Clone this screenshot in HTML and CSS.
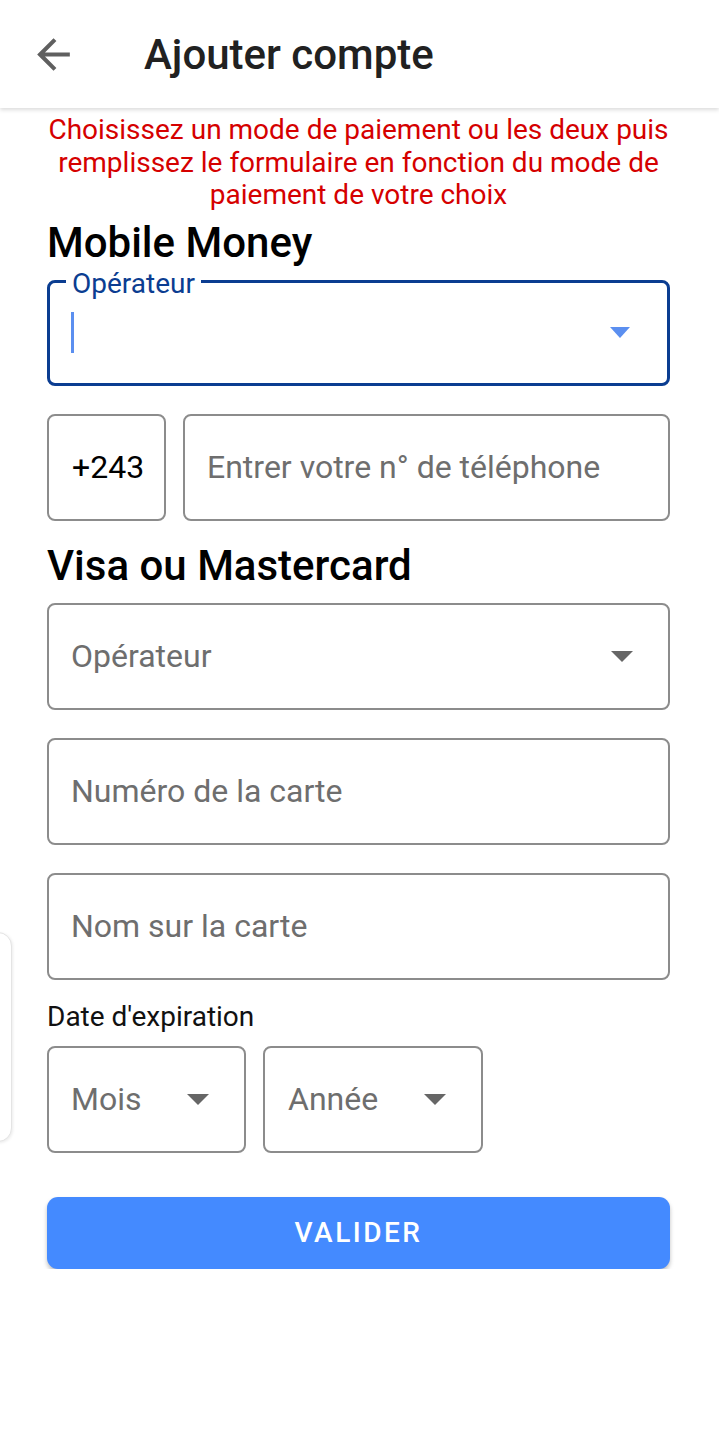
FILE: index.html
```html
<!DOCTYPE html>
<html lang="fr">
<head>
  <meta charset="UTF-8">
  <meta name="viewport" content="width=device-width, initial-scale=1.0">
  <title>Ajouter compte</title>
  <link rel="stylesheet" href="styles.css">
</head>
<body>
  <header class="toolbar">
    <svg class="back-icon" viewBox="0 0 24 24" width="49" height="49">
      <path d="M20 11H7.83l5.59-5.59L12 4l-8 8 8 8 1.41-1.41L7.83 13H20v-2z" fill="#5f5f5f"/>
    </svg>
    <h1 class="toolbar-title">Ajouter compte</h1>
  </header>

  <main class="content">
    <p class="notice">Choisissez un mode de paiement ou les deux puis remplissez le formulaire en fonction du mode de paiement de votre choix</p>

    <h2 class="section-title">Mobile Money</h2>
    <div class="field field-focused">
      <span class="floating-label">Opérateur</span>
      <span class="cursor"></span>
      <span class="arrow arrow-blue"></span>
    </div>

    <div class="phone-row">
      <div class="field prefix">+243</div>
      <div class="field phone">
        <span class="placeholder">Entrer votre n° de téléphone</span>
      </div>
    </div>

    <h2 class="section-title visa-title">Visa ou Mastercard</h2>
    <div class="field select">
      <span class="placeholder">Opérateur</span>
      <span class="arrow"></span>
    </div>
    <div class="field">
      <span class="placeholder">Numéro de la carte</span>
    </div>
    <div class="field">
      <span class="placeholder">Nom sur la carte</span>
    </div>

    <div class="date-label">Date d'expiration</div>
    <div class="date-row">
      <div class="field select month">
        <span class="placeholder">Mois</span>
        <span class="arrow"></span>
      </div>
      <div class="field select year">
        <span class="placeholder">Année</span>
        <span class="arrow"></span>
      </div>
    </div>

    <button class="submit">VALIDER</button>
  </main>

  <!-- card peeking in from the left edge -->
  <div class="side-card"></div>
</body>
</html>
```

FILE: styles.css
```css
body {
  margin: 0;
  font-family: Roboto, "Liberation Sans", sans-serif;
  background-color: #fff;
  color: #111;
}

.toolbar {
  height: 108px;
  display: flex;
  align-items: center;
  padding-left: 29px;
  box-sizing: border-box;
  background-color: #fff;
  box-shadow: 0 2px 4px rgba(0, 0, 0, 0.14);
  position: relative;
}

.back-icon {
  display: block;
}

.toolbar-title {
  margin: 0 0 0 66px;
  font-size: 42px;
  font-weight: 500;
  color: #212121;
}

.content {
  padding: 0 49px 0 47px;
}

.notice {
  margin: 6px 0 0;
  font-size: 28px;
  line-height: 32.5px;
  text-align: center;
  color: #d50000;
}

.section-title {
  margin: 5px 0 11px;
  font-size: 42px;
  line-height: 52px;
  font-weight: 500;
  color: #000;
}

.visa-title {
  margin-top: 19px;
}

.field {
  position: relative;
  height: 107px;
  box-sizing: border-box;
  border: 2px solid #8c8c8c;
  border-radius: 8px;
  display: flex;
  align-items: center;
  padding: 0 22px 0 22px;
  font-size: 32px;
  margin-bottom: 28px;
}

.field-focused {
  height: 106px;
  border: 3px solid #0b3d91;
  padding-left: 21px;
}

.floating-label {
  position: absolute;
  left: 16px;
  top: -13px;
  padding: 0 6px;
  background-color: #fff;
  font-size: 28px;
  line-height: 28px;
  color: #0b3d91;
}

.cursor {
  width: 3px;
  height: 41px;
  background-color: #5b8ff0;
}

.placeholder {
  color: #6e6e6e;
}

.arrow {
  margin-left: auto;
  width: 0;
  height: 0;
  border-left: 11px solid transparent;
  border-right: 11px solid transparent;
  border-top: 11px solid #666;
  margin-right: 13px;
}

.arrow-blue {
  border-top-color: #5b8ff0;
  border-left-width: 10px;
  border-right-width: 10px;
  margin-right: 15px;
}

.phone-row {
  display: flex;
  gap: 17px;
}

.phone-row .field {
  margin-bottom: 0;
}

.prefix {
  width: 119px;
  padding: 0 0 0 23px;
  color: #000;
}

.phone {
  flex: 1;
  padding-left: 22px;
}

.date-label {
  margin: -7px 0 13px;
  font-size: 28px;
  line-height: 32px;
}

.date-row {
  display: flex;
  gap: 17px;
}

.date-row .field {
  margin-bottom: 0;
}

.month {
  width: 199px;
}

.year {
  width: 220px;
}

.year .placeholder {
  margin-left: 1px;
}

.submit {
  display: block;
  width: 100%;
  height: 72px;
  margin-top: 44px;
  border: none;
  border-radius: 11px;
  background-color: #448aff;
  color: #fff;
  font-family: Roboto, "Liberation Sans", sans-serif;
  font-size: 28px;
  font-weight: 500;
  letter-spacing: 2.5px;
  box-shadow: 0 3px 4px rgba(0, 0, 0, 0.25);
}

.side-card {
  position: absolute;
  left: -30px;
  top: 932px;
  width: 40px;
  height: 208px;
  border: 1px solid #e4e4e4;
  border-radius: 14px;
  background-color: #fff;
  box-shadow: 1px 1px 3px rgba(0, 0, 0, 0.08);
}
```
